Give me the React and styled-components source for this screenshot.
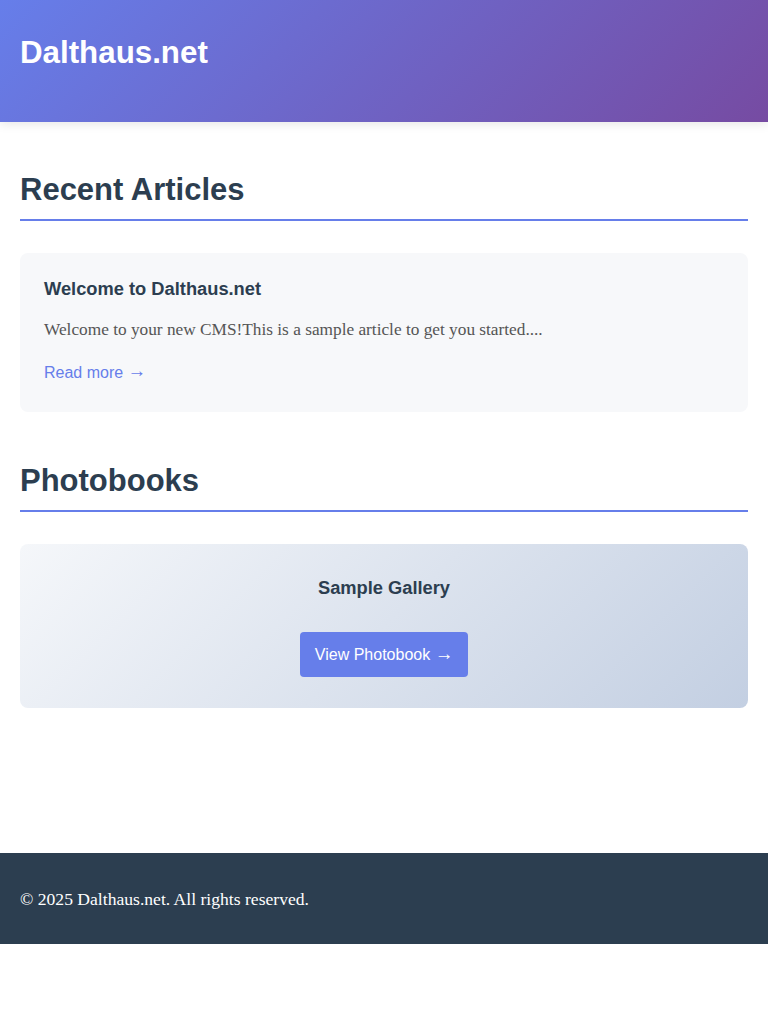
import React from "react";
import styled, { createGlobalStyle } from "styled-components";

const GlobalStyle = createGlobalStyle`
  * {
    box-sizing: border-box;
  }

  body {
    margin: 0;
    font-family: "Liberation Serif", Georgia, serif;
    line-height: 1.6;
    color: #333;
    background: #fff;
  }
`;

const Header = styled.header`
  background: linear-gradient(135deg, #667eea 0%, #764ba2 100%);
  box-shadow: 0 2px 10px rgba(0, 0, 0, 0.1);
  padding: 34px 20px 51px;
`;

const Logo = styled.h1`
  margin: 0;
  font-family: "Liberation Sans", Arial, sans-serif;
  font-size: 31.3px;
  line-height: 37px;
  font-weight: 700;
  color: #fff;
`;

const Main = styled.main`
  padding: 51px 20px 145px;
`;

const Section = styled.section`
  & + & {
    margin-top: 52px;
  }
`;

const SectionTitle = styled.h2`
  margin: 0 0 32px;
  padding-bottom: 12px;
  border-bottom: 2px solid #667eea;
  font-family: "Liberation Sans", Arial, sans-serif;
  font-size: 31px;
  line-height: 34px;
  font-weight: 700;
  color: #2c3e50;
`;

const ArticleCard = styled.article`
  background: #f7f8fa;
  border-radius: 8px;
  padding: 24px 24px 26px;
`;

const CardTitle = styled.h3`
  margin: 0 0 16px;
  font-family: "Liberation Sans", Arial, sans-serif;
  font-size: 18.3px;
  line-height: 24px;
  font-weight: 700;
  color: #2c3e50;
`;

const Excerpt = styled.p`
  margin: 0 0 17px;
  font-size: 17.3px;
  line-height: 26px;
  color: #555;
`;

const ReadMore = styled.a`
  font-family: "Liberation Sans", Arial, sans-serif;
  font-size: 16px;
  line-height: 26px;
  color: #667eea;
  text-decoration: none;
`;

const Arrow = styled.span`
  font-size: 18.5px;
  line-height: 1;
  vertical-align: 1px;
`;

const GalleryCard = styled.div`
  background: linear-gradient(135deg, #f5f7fa 0%, #c3cfe2 100%);
  border-radius: 8px;
  padding: 33px 20px 31px;
  display: flex;
  flex-direction: column;
  align-items: center;
`;

const GalleryTitle = styled.h3`
  margin: 0 0 33px;
  font-family: "Liberation Sans", Arial, sans-serif;
  font-size: 18.3px;
  line-height: 22px;
  font-weight: 700;
  color: #2c3e50;
`;

const Button = styled.a`
  display: inline-flex;
  align-items: center;
  height: 45px;
  padding: 0 15px;
  background: #667eea;
  border-radius: 4px;
  font-family: "Liberation Sans", Arial, sans-serif;
  font-size: 16px;
  color: #fff;
  text-decoration: none;
  white-space: pre;
`;

const Footer = styled.footer`
  background: #2c3e50;
  color: #fff;
  padding: 33px 20px 32px;
  font-size: 17.6px;
  line-height: 26px;
`;

export default function App() {
  return (
    <>
      <GlobalStyle />
      <Header>
        <Logo>Dalthaus.net</Logo>
      </Header>
      <Main>
        <Section>
          <SectionTitle>Recent Articles</SectionTitle>
          <ArticleCard>
            <CardTitle>Welcome to Dalthaus.net</CardTitle>
            <Excerpt>
              Welcome to your new CMS!This is a sample article to get you started....
            </Excerpt>
            <ReadMore href="#">
              Read more <Arrow>→</Arrow>
            </ReadMore>
          </ArticleCard>
        </Section>
        <Section>
          <SectionTitle>Photobooks</SectionTitle>
          <GalleryCard>
            <GalleryTitle>Sample Gallery</GalleryTitle>
            <Button href="#">
              View Photobook <Arrow>→</Arrow>
            </Button>
          </GalleryCard>
        </Section>
      </Main>
      <Footer>© 2025 Dalthaus.net. All rights reserved.</Footer>
    </>
  );
}
